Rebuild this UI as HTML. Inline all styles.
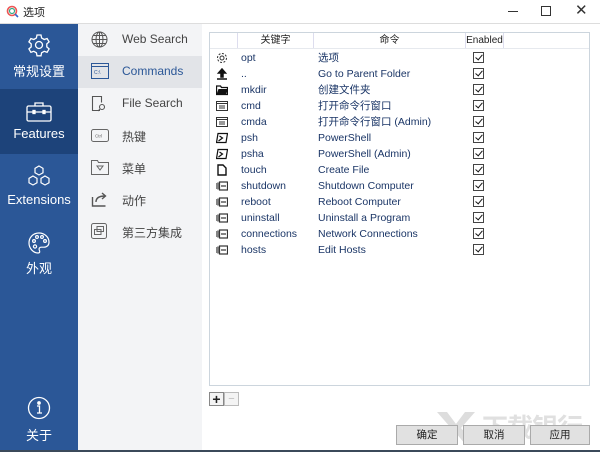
<!DOCTYPE html>
<html><head><meta charset="utf-8"><style>
*{margin:0;padding:0;box-sizing:border-box}
body{width:600px;height:452px;overflow:hidden;background:#fff;font-family:"Liberation Sans","Noto Sans CJK SC",sans-serif;position:relative;font-size:11px;color:#222}
.a{position:absolute}
#title{left:0;top:0;width:600px;height:24px;background:#fff;border-bottom:1px solid #ddd}
#side{left:0;top:24px;width:78px;height:428px;background:#2b5797}
.si{position:absolute;left:0;width:78px;text-align:center;color:#fff;font-size:13px}
#nav{left:78px;top:24px;width:124px;height:428px;background:#f3f4f6}
.ni{position:absolute;left:0;width:124px;height:32px;font-size:12px;color:#444}
.ni span{position:absolute;left:44px;top:8px}
.ni svg{position:absolute;left:13px;top:7px}
#tbl{left:209px;top:32px;width:381px;height:354px;border:1px solid #ccd5dd;background:#fff}
.hd{position:absolute;top:0;height:16px;border-right:1px solid #dde;font-size:10px;text-align:center;line-height:16px;color:#222}
.row{position:absolute;left:0;width:379px;height:16px;font-size:10.5px;color:#1a3566;line-height:16px}
.row .k{position:absolute;left:31px}
.row .c{position:absolute;left:108px}
.row .i{position:absolute;left:6px;top:2px;width:12px;height:12px}
.cb{position:absolute;left:263px;top:2px;width:11px;height:11px;border:1px solid #444;background:#fff}
.cb:after{content:"";position:absolute;left:3px;top:0px;width:3px;height:6px;border:solid #111;border-width:0 1.3px 1.3px 0;transform:rotate(40deg)}
.btn{position:absolute;top:425px;height:20px;border:1px solid #aaa;background:#e1e1e1;font-size:10.5px;text-align:center;line-height:18px}
</style></head><body>
<div id="title" class="a">
<svg class="a" style="left:6px;top:5px" width="13" height="13" viewBox="0 0 13 13"><circle cx="6" cy="6" r="4.5" fill="none" stroke="#e55" stroke-width="1.6"/><circle cx="6" cy="6" r="2.5" fill="none" stroke="#3a8" stroke-width="1.2"/><path d="M9 9l3 3" stroke="#36c" stroke-width="1.6"/></svg>
<div class="a" style="left:23px;top:4px;font-size:11px">选项</div>
<div class="a" style="left:508px;top:11px;width:10px;height:1px;background:#333"></div>
<div class="a" style="left:541px;top:6px;width:10px;height:10px;border:1px solid #333"></div>
<div class="a" style="left:575px;top:1px;font-size:15px;color:#333">✕</div>
</div>
<div id="side" class="a">
<div class="a" style="left:0;top:65px;width:78px;height:65px;background:#1d437a"></div>
<div class="si" style="top:9px"><svg width="24" height="24" viewBox="0 0 24 24" fill="none" stroke="#fff" stroke-width="1.3"><circle cx="12" cy="12" r="3.5"/><path d="M10 2h4l.6 3 2.6 1.5 2.9-1 2 3.4-2.3 2v3l2.3 2-2 3.4-2.9-1-2.6 1.5-.6 3h-4l-.6-3-2.6-1.5-2.9 1-2-3.4 2.3-2v-3l-2.3-2 2-3.4 2.9 1L9.4 5z"/></svg><div style="margin-top:1px">常规设置</div></div>
<div class="si" style="top:76px"><svg width="26" height="24" viewBox="0 0 26 24" fill="none" stroke="#fff" stroke-width="1.3"><rect x="1" y="6" width="24" height="15" rx="1.5"/><path d="M9 6V3h8v3M1 12h24"/><rect x="7" y="10.5" width="2" height="3" fill="#fff"/><rect x="17" y="10.5" width="2" height="3" fill="#fff"/></svg><div style="margin-top:-1px">Features</div></div>
<div class="si" style="top:141px"><svg width="24" height="26" viewBox="0 0 24 26" fill="none" stroke="#fff" stroke-width="1.2"><path d="M12 1l4 2.3v4.5L12 10 8 7.8V3.3zM6 11l4 2.3v4.5L6 20l-4-2.2v-4.5zM18 11l4 2.3v4.5L18 20l-4-2.2v-4.5z"/></svg><div style="margin-top:-2px">Extensions</div></div>
<div class="si" style="top:207px"><svg width="24" height="24" viewBox="0 0 24 24" fill="none" stroke="#fff" stroke-width="1.2"><path d="M12 2C6 2 2 6.5 2 12s4.5 10 9 10c2 0 2-1.5 1.3-2.8-.8-1.5.3-3 2-3H17c3 0 5-2 5-5C22 6 17.5 2 12 2z"/><circle cx="7" cy="10" r="1.4"/><circle cx="10" cy="6" r="1.4"/><circle cx="15" cy="6" r="1.4"/><circle cx="18" cy="10" r="1.4"/><circle cx="8" cy="15.5" r="1.6"/></svg><div style="margin-top:0">外观</div></div>
<div class="si" style="top:372px"><svg width="24" height="24" viewBox="0 0 24 24" fill="none" stroke="#fff" stroke-width="1.3"><circle cx="12" cy="12" r="10.5"/><circle cx="12" cy="7" r="1.2" fill="#fff"/><path d="M10 10h2.5v7M10 17h5"/></svg><div style="margin-top:2px">关于</div></div>
</div>
<div id="nav" class="a">
<div class="ni" style="top:0"><svg width="17" height="17" viewBox="0 0 17 17" fill="none" stroke="#555" stroke-width="1"><circle cx="8.5" cy="8.5" r="7.5"/><ellipse cx="8.5" cy="8.5" rx="3.5" ry="7.5"/><path d="M1 8.5h15M8.5 1v15M2.5 4.5h12M2.5 12.5h12"/></svg><span>Web Search</span></div>
<div class="ni" style="top:32px;background:#e2e4e8;color:#2b5797"><svg width="18" height="16" viewBox="0 0 18 16" fill="none" stroke="#2b5797" stroke-width="1"><rect x=".5" y=".5" width="17" height="15"/><path d="M.5 3.5h17"/><text x="3" y="11" font-size="5" fill="#2b5797" stroke="none" font-family="Liberation Sans">C:\</text></svg><span>Commands</span></div>
<div class="ni" style="top:64px"><svg width="16" height="17" viewBox="0 0 16 17" fill="none" stroke="#555" stroke-width="1.1"><path d="M9 15.5H1.5v-14h9v6"/><circle cx="11" cy="12" r="2.5"/><path d="M9 14l-2 2"/></svg><span>File Search</span></div>
<div class="ni" style="top:96px"><svg width="18" height="16" viewBox="0 0 18 16" fill="none" stroke="#666" stroke-width="1"><rect x=".5" y="2.5" width="17" height="12" rx="2"/><text x="4" y="10.5" font-size="4.5" fill="#666" stroke="none">Ctrl</text></svg><span>热键</span></div>
<div class="ni" style="top:128px"><svg width="18" height="16" viewBox="0 0 18 16" fill="none" stroke="#666" stroke-width="1"><path d="M.5 1.5h6l1 2h10v12H.5z"/><path d="M6 7h6l-3 4z"/></svg><span>菜单</span></div>
<div class="ni" style="top:160px"><svg width="18" height="16" viewBox="0 0 18 16" fill="none" stroke="#555" stroke-width="1.4"><path d="M1.5 6v9h13M5 11c0-4 3-6 9-6M11 2l3.5 3L11 8"/></svg><span>动作</span></div>
<div class="ni" style="top:192px"><svg width="16" height="16" viewBox="0 0 16 16" fill="none" stroke="#666" stroke-width="1"><rect x=".5" y=".5" width="15" height="15" rx="2"/><rect x="6" y="3.5" width="6.5" height="5"/><rect x="3.5" y="6.5" width="6.5" height="5"/></svg><span>第三方集成</span></div>
</div>
<div id="tbl" class="a">
<div class="hd" style="left:0;width:28px"></div>
<div class="hd" style="left:28px;width:76px">关键字</div>
<div class="hd" style="left:104px;width:152px">命令</div>
<div class="hd" style="left:256px;width:38px">Enabled</div>
<div class="a" style="left:0;top:15px;width:379px;height:1px;background:#e6e9ee"></div>
<div class="row" style="top:17px"><svg class="i" viewBox="0 0 12 12" fill="none" stroke="#333"><circle cx="6" cy="6" r="2"/><circle cx="6" cy="6" r="4.5" stroke-dasharray="2 1.5"/></svg><span class="k">opt</span><span class="c">选项</span><i class="cb"></i></div>
<div class="row" style="top:33px"><svg class="i" viewBox="0 0 12 12"><path d="M6 1L2.5 5h2.5v4h2V5h2.5zM1 11h10" stroke="#111" stroke-width="1.5" fill="#111"/></svg><span class="k">..</span><span class="c">Go to Parent Folder</span><i class="cb"></i></div>
<div class="row" style="top:49px"><svg class="i" viewBox="0 0 12 12"><path d="M.5 2h4l1 1.5h6v7H.5z" fill="none" stroke="#111" stroke-width="1.3"/><path d="M.5 10.5L2.5 5h9.5l-2 5.5z" fill="#111"/></svg><span class="k">mkdir</span><span class="c">创建文件夹</span><i class="cb"></i></div>
<div class="row" style="top:65px"><svg class="i" viewBox="0 0 12 12" fill="none" stroke="#333"><rect x=".5" y="1.5" width="11" height="9"/><path d="M.5 3.5h11M3 6h6M3 8h6"/></svg><span class="k">cmd</span><span class="c">打开命令行窗口</span><i class="cb"></i></div>
<div class="row" style="top:81px"><svg class="i" viewBox="0 0 12 12" fill="none" stroke="#333"><rect x=".5" y="1.5" width="11" height="9"/><path d="M.5 3.5h11M3 6h6M3 8h6"/></svg><span class="k">cmda</span><span class="c">打开命令行窗口 (Admin)</span><i class="cb"></i></div>
<div class="row" style="top:97px"><svg class="i" viewBox="0 0 12 12" fill="none" stroke="#111" stroke-width="1.2"><path d="M2 1.5h9.5L10 10.5H.5z"/><path d="M3.5 4l3 2-4 3"/></svg><span class="k">psh</span><span class="c">PowerShell</span><i class="cb"></i></div>
<div class="row" style="top:113px"><svg class="i" viewBox="0 0 12 12" fill="none" stroke="#111" stroke-width="1.2"><path d="M2 1.5h9.5L10 10.5H.5z"/><path d="M3.5 4l3 2-4 3"/></svg><span class="k">psha</span><span class="c">PowerShell (Admin)</span><i class="cb"></i></div>
<div class="row" style="top:129px"><svg class="i" viewBox="0 0 12 12" fill="none" stroke="#111" stroke-width="1.4"><path d="M2 1h5l3 3v7H2z"/></svg><span class="k">touch</span><span class="c">Create File</span><i class="cb"></i></div>
<div class="row" style="top:145px"><svg class="i" viewBox="0 0 12 12" fill="none" stroke="#333" stroke-width="1.2"><path d="M0 3v6M2 2.5v7"/><rect x="3.5" y="2" width="8" height="8"/><path d="M5 6h5"/></svg><span class="k">shutdown</span><span class="c">Shutdown Computer</span><i class="cb"></i></div>
<div class="row" style="top:161px"><svg class="i" viewBox="0 0 12 12" fill="none" stroke="#333" stroke-width="1.2"><path d="M0 3v6M2 2.5v7"/><rect x="3.5" y="2" width="8" height="8"/><path d="M5 6h5"/></svg><span class="k">reboot</span><span class="c">Reboot Computer</span><i class="cb"></i></div>
<div class="row" style="top:177px"><svg class="i" viewBox="0 0 12 12" fill="none" stroke="#333" stroke-width="1.2"><path d="M0 3v6M2 2.5v7"/><rect x="3.5" y="2" width="8" height="8"/><path d="M5 6h5"/></svg><span class="k">uninstall</span><span class="c">Uninstall a Program</span><i class="cb"></i></div>
<div class="row" style="top:193px"><svg class="i" viewBox="0 0 12 12" fill="none" stroke="#333" stroke-width="1.2"><path d="M0 3v6M2 2.5v7"/><rect x="3.5" y="2" width="8" height="8"/><path d="M5 6h5"/></svg><span class="k">connections</span><span class="c">Network Connections</span><i class="cb"></i></div>
<div class="row" style="top:209px"><svg class="i" viewBox="0 0 12 12" fill="none" stroke="#333" stroke-width="1.2"><path d="M0 3v6M2 2.5v7"/><rect x="3.5" y="2" width="8" height="8"/><path d="M5 6h5"/></svg><span class="k">hosts</span><span class="c">Edit Hosts</span><i class="cb"></i></div>
</div>
<div class="a" style="left:209px;top:392px;width:15px;height:14px;border:1px solid #888;background:#f4f4f4;font-size:14px;line-height:12px;text-align:center;font-weight:bold">+</div>
<div class="a" style="left:224px;top:392px;width:15px;height:14px;border:1px solid #bbb;background:#f4f4f4;color:#bbb;text-align:center;line-height:12px">−</div>
<svg class="a" style="left:435px;top:410px" width="42" height="36" viewBox="0 0 42 36"><path d="M2 2h10l9 12 9-12h10L26 18l14 16H30l-9-11-9 11H2l14-16z" fill="#ddd"/></svg>
<div class="a" style="left:482px;top:408px;font-size:26px;color:#e0e0e0;font-weight:bold;letter-spacing:-1px;white-space:nowrap">下载银行</div>
<div class="btn" style="left:396px;width:62px">确定</div>
<div class="btn" style="left:463px;width:62px">取消</div>
<div class="btn" style="left:530px;width:60px">应用</div>
<div class="a" style="left:0;top:450px;width:600px;height:2px;background:#3b4a5a"></div>
</body></html>
